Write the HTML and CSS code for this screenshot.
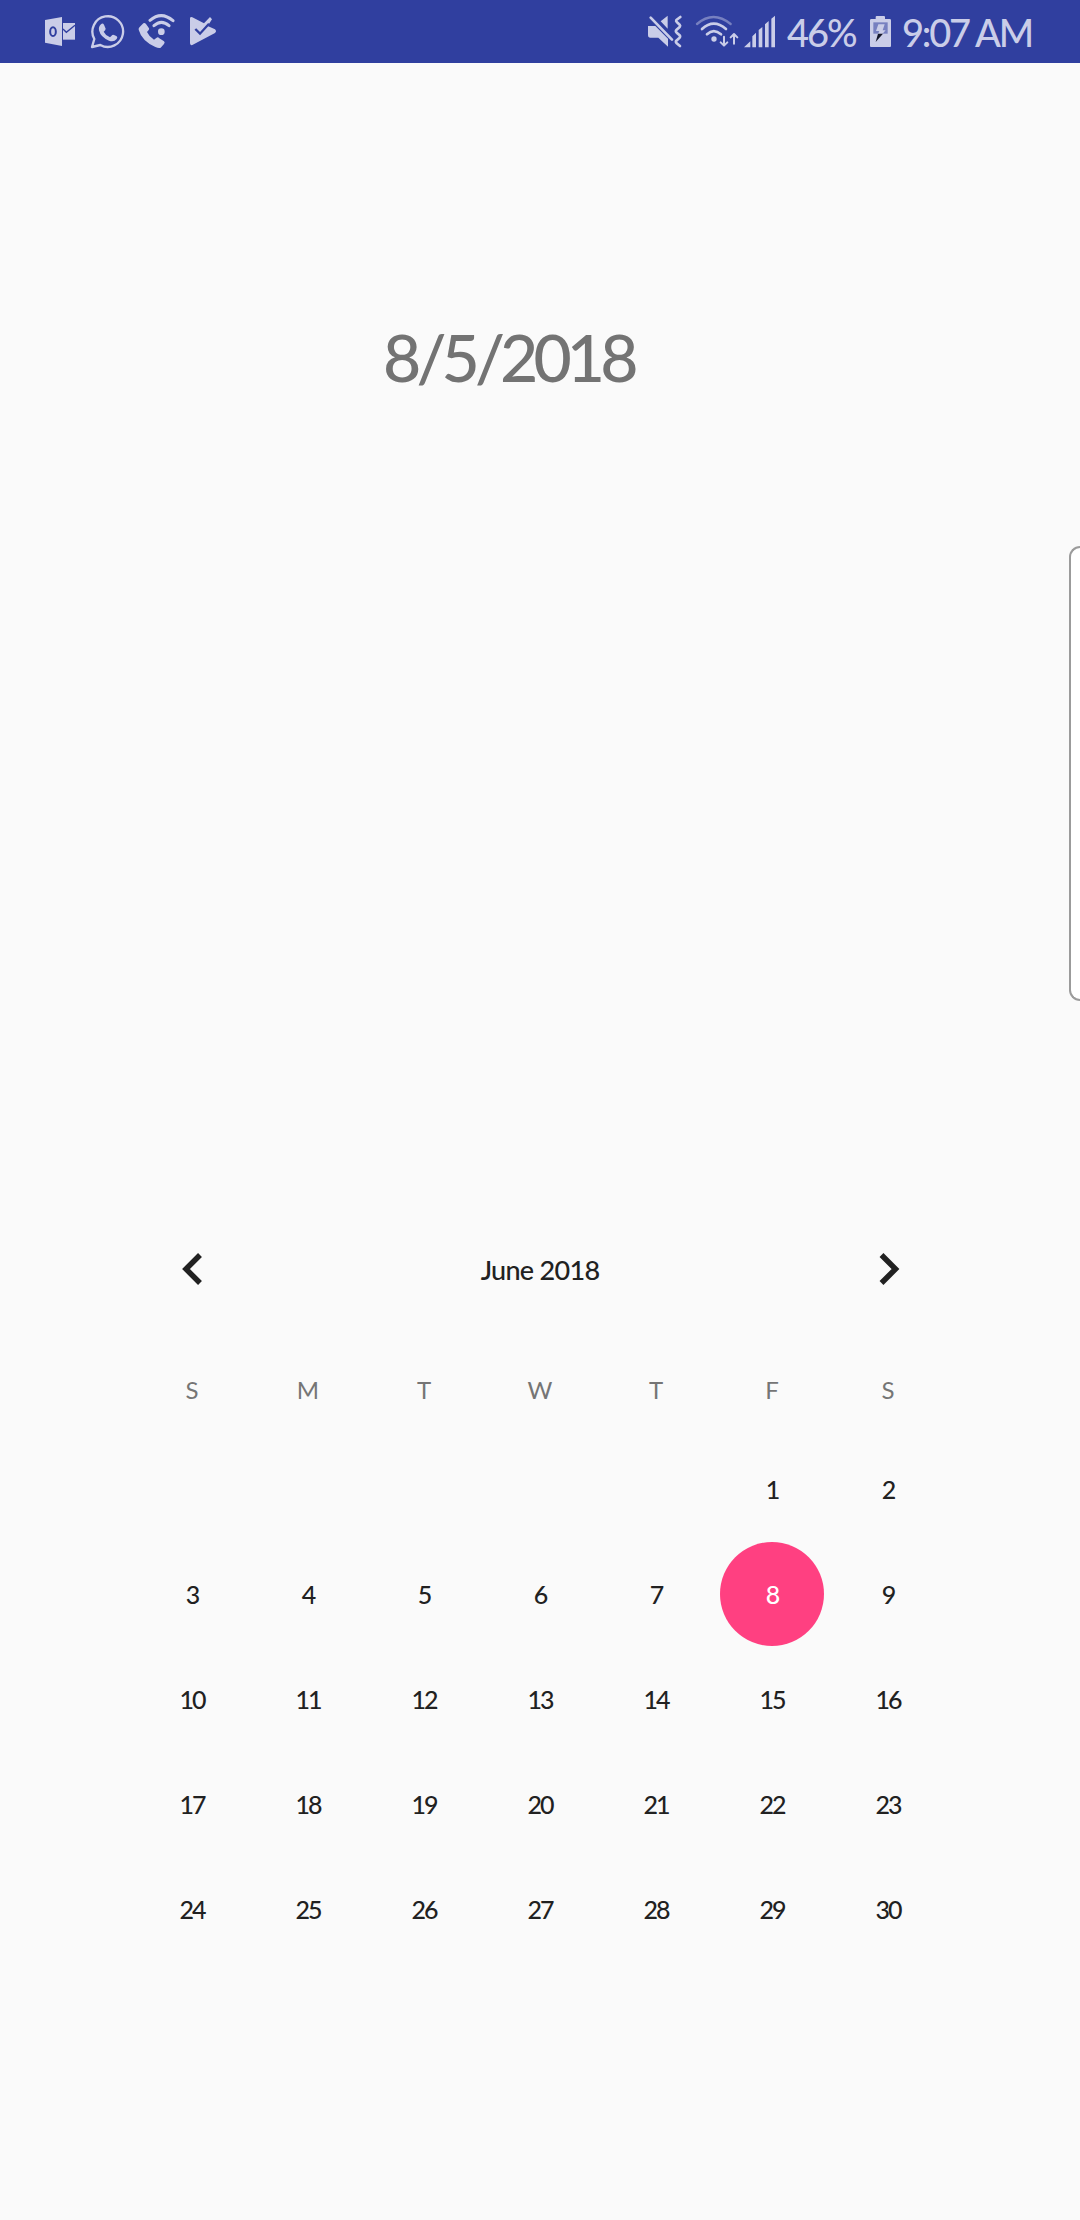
FILE: index.html
```
<!DOCTYPE html>
<html lang="en">
<head>
<meta charset="utf-8">
<title>Calendar</title>
<link rel="stylesheet" href="styles.css">
</head>
<body>
<header class="status">
  <div class="group notifications">
    <svg width="32" height="63" viewBox="42 0 96 189"><path class="ink" d="M45 60L96 51V138L45 128Z"/><path class="ink" d="M99 69H135V119H99Z"/><path class="cut" d="M99 87L109 97L135 76" stroke-width="4"/><ellipse class="cut" cx="69" cy="95" rx="8.5" ry="13" stroke-width="6"/></svg>
    <svg width="35" height="63" viewBox="180 0 105 189"><path class="line" d="M186 141L193 117A46 46 0 1 1 211 135Z" stroke-width="7"/><path class="ink" d="M213 73Q218 68 222 74L227 86Q227 90 221 95Q227 107 240 112L247 105Q250 103 254 106L260 109Q264 111 260 117Q252 127 237 122Q212 112 207 91Q205 80 213 73Z"/></svg>
    <svg width="37" height="63" viewBox="318 0 111 189"><path class="ink" d="M323 81L334 70Q338 67 342 72L351 85Q353 89 345 96Q352 111 366 119L374 113Q378 110 382 115L396 124Q400 127 396 132L386 143Q381 146 370 141Q329 122 320 89Q319 85 323 81Z"/><path class="line" d="M354 61Q388 32 423 62M366 77Q388 57 411 77" stroke-width="9"/><circle class="ink" cx="388" cy="95" r="10"/></svg>
    <svg width="28" height="63" viewBox="474 0 84 189"><path class="ink" d="M477 55Q478 49 484 52L519 70L537 51L543 58L530 78L552 88Q558 94 552 99L484 135Q477 137 477 130Z"/><path class="cut" d="M493 87L507 101L534 71" stroke-width="7"/></svg>
  </div>
  <div class="group system">
    <svg width="36" height="63" viewBox="48 0 108 189"><path class="ink" d="M52 78H73L111 116V140L82 113H58Q51 113 51 105V78ZM89 64L110 47V86Z"/><path class="line" d="M59 53L123 119" stroke-width="8"/><path class="line" d="M148 51L136 60Q134 63 138 67L146 74Q149 77 146 81L136 90Q133 94 137 98L146 106Q149 110 145 114L136 122Q133 126 137 130L147 138" stroke-width="8"/></svg>
    <svg width="44" height="63" viewBox="192 0 132 189"><path class="line faint" d="M198 72Q247 30 299 72" stroke-width="7"/><path class="line" d="M213 87Q248 55 285 87M228 103Q248 84 270 103" stroke-width="8"/><circle class="ink" cx="249" cy="117" r="8"/><path class="line" d="M279 110V136M269 127L279 137L289 127M309 131V102M299 112L309 102L319 112" stroke-width="6"/></svg>
    <svg width="33" height="63" viewBox="336 0 99 189"><path class="ink" d="M339 142L358 124V142ZM364 109L375 98V142H364ZM383 90L394 81V142H383ZM402 73L413 63V142H402ZM421 56L432 47V142H421Z"/></svg>
    <span class="level">46%</span>
    <svg width="23" height="63" viewBox="84 0 69 189"><path class="ink" d="M87 61Q87 57 91 57H104V51Q104 48 107 48H129Q132 48 132 51V57H146Q150 57 150 61V138Q150 141 147 141H90Q87 141 87 138Z"/><path class="well" d="M97 67H140V101H97Z"/><path class="ink" d="M112 73H131L125 91H134L124 102H111L115 93H105Z"/><path class="spark" d="M111 101H126L104 126Z"/></svg>
    <span class="clock">9:07 AM</span>
  </div>
</header>
<main class="screen">
  <h1 class="date">8/5/2018</h1>
  <section class="calendar">
    <div class="month">
      <svg class="arrow" width="116" height="36" viewBox="0 0 116 36"><path d="M66 4L52 18L66 32"/></svg>
      <h2 class="title">June 2018</h2>
      <svg class="arrow" width="116" height="36" viewBox="0 0 116 36"><path d="M51.5 4L65.5 18L51.5 32"/></svg>
    </div>
    <div class="weekdays"><span>S</span><span>M</span><span>T</span><span>W</span><span>T</span><span>F</span><span>S</span></div>
    <div class="days">
      <span class="first">1</span><span>2</span>
      <span>3</span><span>4</span><span>5</span><span>6</span><span>7</span><span class="selected">8</span><span>9</span>
      <span>10</span><span>11</span><span>12</span><span>13</span><span>14</span><span>15</span><span>16</span>
      <span>17</span><span>18</span><span>19</span><span>20</span><span>21</span><span>22</span><span>23</span>
      <span>24</span><span>25</span><span>26</span><span>27</span><span>28</span><span>29</span><span>30</span>
    </div>
  </section>
</main>
<aside class="edge"></aside>
</body>
</html>
```
FILE: styles.css
```
* { box-sizing: border-box; }
body {
  position: relative;
  height: 2220px;
  margin: 0;
  overflow: hidden;
  background: #fafafa;
  color: #212121;
  font-family: Lato, "Open Sans", sans-serif;
}
svg { display: block; flex: none; }
.status {
  display: flex;
  justify-content: space-between;
  height: 63px;
  padding: 0 45px 0 44px;
  background: #303f9f;
  color: #cacde8;
}
.group { display: flex; }
.notifications { gap: 13.5px; }
.ink { fill: #cacde8; }
.line { fill: none; stroke: #cacde8; stroke-linecap: round; stroke-linejoin: round; }
.cut { fill: none; stroke: #303f9f; }
.faint { stroke: #7780c0; }
.well { fill: #7780c0; }
.spark { fill: #15172a; }
.system svg:nth-child(2) { margin-left: 12px; }
.system svg:nth-child(3) { margin-left: 4px; }
.level, .clock {
  padding-top: 1px;
  font-size: 38px;
  font-weight: 500;
  line-height: 63px;
  white-space: nowrap;
}
.level { width: 93px; padding-left: 11px; letter-spacing: -2px; }
.clock { width: 143px; padding-left: 10px; letter-spacing: -2.2px; }
.date {
  margin: 0;
  padding: 254px 0 0 383px;
  color: #737373;
  font-size: 66px;
  font-weight: 500;
  line-height: 80px;
  letter-spacing: -4.9px;
}
.calendar { width: 812px; margin: 854px auto 0; }
.month { display: flex; align-items: center; justify-content: space-between; height: 36px; }
.arrow path { fill: none; stroke: #212121; stroke-width: 5.5; }
.title { margin: 0; font-size: 27px; font-weight: 500; letter-spacing: -0.7px; }
.weekdays, .days { display: grid; grid-template-columns: repeat(7, 116px); justify-items: center; align-items: center; }
.weekdays { height: 40px; margin-top: 82px; color: #757575; font-size: 24px; }
.days { grid-auto-rows: 105px; margin-top: 27px; font-size: 25px; font-weight: 500; letter-spacing: -1.9px; }
.first { grid-column: 6; }
.selected {
  width: 104px;
  height: 104px;
  border-radius: 50%;
  background: #ff4081;
  color: #fff;
  line-height: 104px;
  text-align: center;
}
.edge {
  position: absolute;
  top: 546px;
  right: 0;
  width: 11px;
  height: 455px;
  border: 2px solid #9b9b9b;
  border-right: 0;
  border-radius: 13px 0 0 13px;
  background: #fff;
}
```
